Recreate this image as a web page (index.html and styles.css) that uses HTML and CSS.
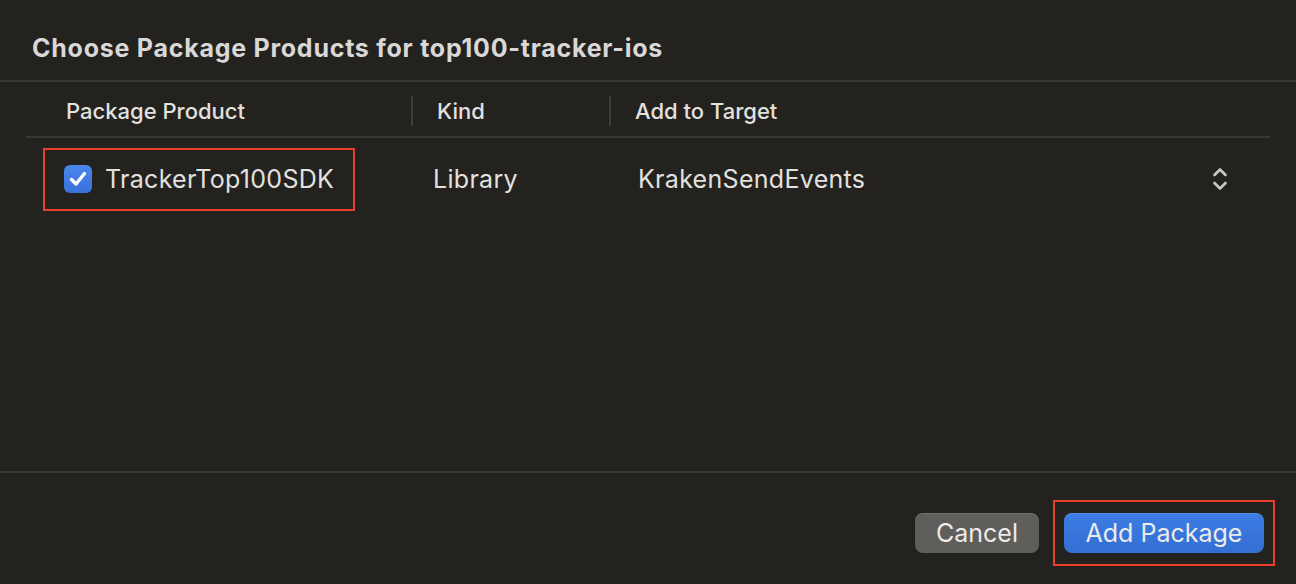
FILE: index.html
```html
<!DOCTYPE html>
<html>
<head>
<meta charset="utf-8">
<link rel="stylesheet" href="styles.css">
</head>
<body>
<div class="dialog">
  <header class="title-bar">
    <h1 class="title">Choose Package Products for top100-tracker-ios</h1>
  </header>
  <div class="table">
    <div class="thead">
      <div class="th col-product">Package Product</div>
      <div class="th col-kind">Kind</div>
      <div class="th col-target">Add to Target</div>
    </div>
    <div class="row">
      <div class="cell col-product">
        <label class="highlight product">
          <span class="checkbox">
            <svg viewBox="0 0 28 28" width="28" height="28"><path d="M7.5 14.5 L12 19 L20.5 8.5" fill="none" stroke="#fff" stroke-width="3.4" stroke-linecap="round" stroke-linejoin="round"/></svg>
          </span>
          <span class="product-name">TrackerTop100SDK</span>
        </label>
      </div>
      <div class="cell col-kind kind">Library</div>
      <div class="cell col-target target">
        <span class="target-name">KrakenSendEvents</span>
        <svg class="stepper" viewBox="0 0 16 26" width="16" height="26"><path d="M2.5 9 L8 3.5 L13.5 9 M2.5 17 L8 22.5 L13.5 17" fill="none" stroke="#c9c8c6" stroke-width="2.6" stroke-linecap="round" stroke-linejoin="round"/></svg>
      </div>
    </div>
  </div>
  <footer class="footer">
    <button class="btn btn-cancel">Cancel</button>
    <div class="highlight btn-wrap">
      <button class="btn btn-primary">Add Package</button>
    </div>
  </footer>
</div>
</body>
</html>
```

FILE: styles.css
```css
* { box-sizing: border-box; }
html, body {
  margin: 0;
  padding: 0;
  background: #23221f;
}
body {
  font-family: Inter, "Noto Sans", "Liberation Sans", sans-serif;
  color: #e2e1df;
}
.dialog {
  width: 1296px;
  height: 584px;
  display: flex;
  flex-direction: column;
  background: #23221f;
}
.title-bar {
  height: 82px;
  border-bottom: 2px solid #393835;
  display: flex;
  align-items: center;
  padding-left: 32px;
  padding-top: 15px;
}
.title {
  margin: 0;
  font-size: 25px;
  font-weight: 700;
  color: #d9d8d6;
  letter-spacing: 0.75px;
}
.table {
  margin: 0 26px;
  flex: 1;
}
.thead {
  height: 56px;
  display: flex;
  align-items: center;
  border-bottom: 2px solid #393835;
  padding-top: 3px;
}
.th {
  font-size: 22px;
  font-weight: 500;
  color: #e2e1df;
  height: 30px;
  display: flex;
  align-items: center;
}
.col-product { width: 385px; }
.col-kind { width: 198px; }
.col-target { flex: 1; }
.th.col-product { padding-left: 40px; }
.th.col-kind, .th.col-target {
  border-left: 2px solid #3e3d3a;
  padding-left: 24px;
}
.row {
  display: flex;
  align-items: center;
  padding-top: 8px;
  height: 74px;
}
.cell {
  display: flex;
  align-items: center;
  font-size: 25px;
  letter-spacing: 0.3px;
  color: #e2e1df;
}
.highlight {
  border: 2px solid #e8402c;
}
.product {
  display: flex;
  align-items: center;
  margin-left: 17px;
  width: 312px;
  height: 63px;
  padding-left: 19px;
  gap: 13px;
}
.checkbox {
  width: 28px;
  height: 28px;
  border-radius: 6px;
  background: linear-gradient(#4a86ee, #3a70dc);
  display: flex;
}
.kind { padding-left: 22px; }
.target { padding-left: 29px; padding-right: 42px; justify-content: space-between; }
.footer {
  height: 113px;
  border-top: 2px solid #393835;
  display: flex;
  align-items: center;
  justify-content: flex-end;
  padding-right: 21px;
  padding-top: 8px;
  gap: 14px;
}
.btn {
  height: 40px;
  border: none;
  border-radius: 8px;
  font-family: inherit;
  font-size: 25px;
  color: #ecebe9;
  padding: 0;
}
.btn-cancel {
  width: 124px;
  background: #5f5e5b;
  box-shadow: inset 0 1px 0 rgba(255,255,255,0.12);
}
.btn-wrap {
  padding: 11px 9px;
}
.btn-primary {
  width: 200px;
  background: linear-gradient(#3c7de4, #346ed2);
  box-shadow: inset 0 1px 0 rgba(255,255,255,0.15);
}
```
